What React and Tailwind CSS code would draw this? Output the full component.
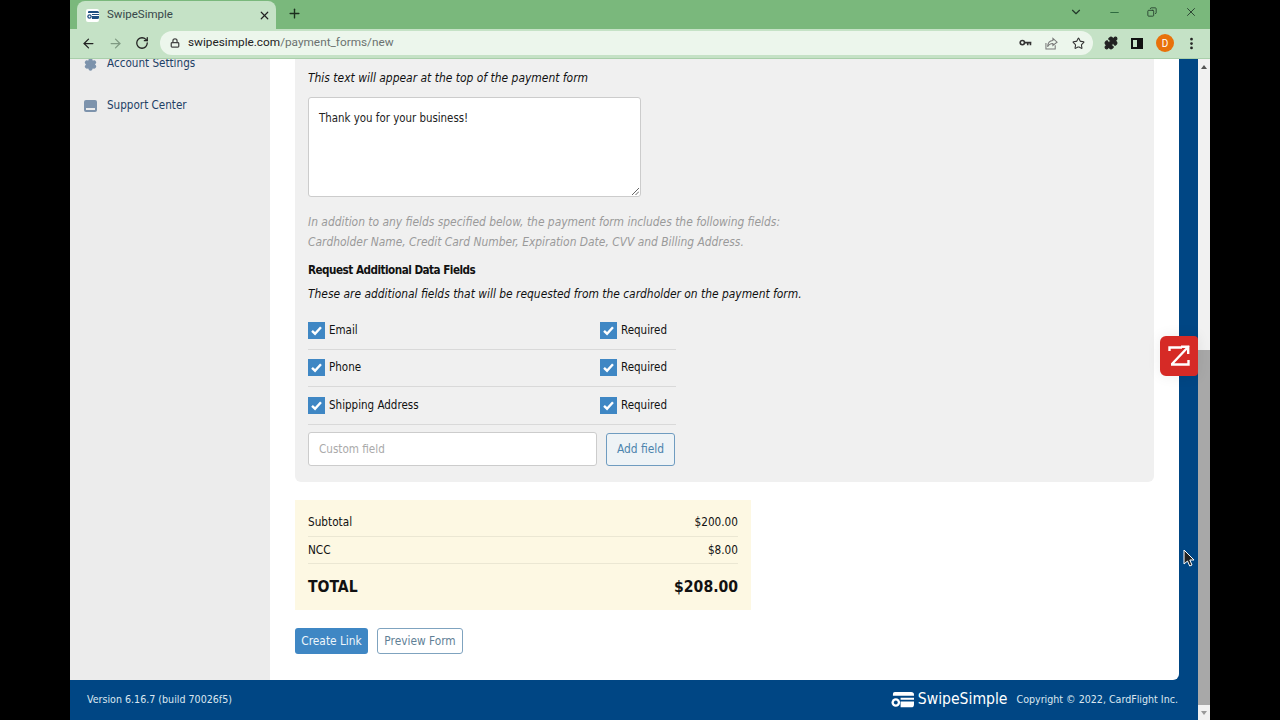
import { ArrowLeft, ArrowRight, RotateCw, Lock, Plus, X, ChevronDown, Minus, Copy, Star, Puzzle, EllipsisVertical, Settings } from "lucide-react";

const font = "font-['DejaVu_Sans_Condensed','DejaVu_Sans',sans-serif]";

function CardLogo({ className, dot, bar }) {
  return (
    <svg viewBox="0 0 24 16" className={className}>
      <path d="M4 0h17a3 3 0 0 1 3 3v1H2V2a2 2 0 0 1 2-2z" fill={bar} />
      <path d="M10 6h14v2H10zM10 10h14v3a3 3 0 0 1-3 3H10z" fill={bar} />
      <circle cx="5" cy="11" r="4.5" fill={bar} />
      <circle cx="5" cy="11" r="2" fill={dot} />
    </svg>
  );
}

function Check({ label }) {
  return (
    <div className="flex items-center gap-1">
      <span className="flex h-[17px] w-[17px] items-center justify-center bg-[#3f87c4]">
        <svg viewBox="0 0 16 16" className="h-[13px] w-[13px]">
          <path d="M2.5 8.5l3.7 3.5 7.3-8" fill="none" stroke="#fff" strokeWidth="3" />
        </svg>
      </span>
      <span className="text-[11.5px] text-[#111]">{label}</span>
    </div>
  );
}

function FieldRow({ label }) {
  return (
    <div className="flex h-[37.5px] w-[368px] items-center border-b border-[#d9d9d9]">
      <div className="w-[292px]">
        <Check label={label} />
      </div>
      <Check label="Required" />
    </div>
  );
}

function Browser() {
  return (
    <div className="shrink-0">
      {/* Tabs */}
      <div className="flex h-[29px] items-end bg-[#7ab87c] pl-[7px]">
        <div className="flex h-[28px] w-[199px] items-center rounded-t-lg bg-[#c5e2c6] pl-[9px] pr-[5px]">
          <span className="flex h-[13px] w-[13px] items-center justify-center rounded-[2px] bg-white">
            <CardLogo className="w-[12px]" bar="#1d4f80" dot="#fff" />
          </span>
          <span className="ml-[8px] flex-1 font-['Roboto',sans-serif] text-[11.5px] text-[#37474a]">SwipeSimple</span>
          <X size={13} strokeWidth={2.2} className="text-[#222]" />
        </div>
        <Plus size={15} strokeWidth={2.2} className="mb-[8px] ml-[11px] text-[#1c2f1e]" />
        <div className="mb-[10px] ml-auto flex items-center pr-[12px] text-[#22382a]">
          <ChevronDown size={14} className="mr-[25px]" />
          <Minus size={13} className="mr-[26px] text-[#2e6b40]" />
          <Copy size={10} className="mr-[27px] -scale-x-100" />
          <X size={14} strokeWidth={1.5} />
        </div>
      </div>
      {/* Toolbar */}
      <div className="flex h-[30px] items-center border-b border-[#a9cfaa] bg-[#c5e2c6] pb-[1px] pl-[11px] pr-[11px]">
        <ArrowLeft size={15} strokeWidth={2} className="text-[#222]" />
        <ArrowRight size={15} strokeWidth={2} className="ml-[12px] text-[#7f9a82]" />
        <RotateCw size={14} strokeWidth={2.2} className="ml-[12px] text-[#222]" />
        <div className="ml-[11px] flex h-[24px] flex-1 items-center rounded-full bg-[#ecf6ec] pl-[10px] pr-[8px]">
          <Lock size={10} strokeWidth={3} className="text-[#444]" />
          <span className="ml-[8px] font-['Roboto',sans-serif] text-[11.8px] text-[#222]">
            swipesimple.com<span className="text-[#6b7270]">/payment_forms/new</span>
          </span>
          <svg viewBox="0 0 14 10" className="ml-auto h-[9px] w-[13px]" fill="none" stroke="#333" strokeWidth="1.8">
            <circle cx="3.5" cy="4" r="2.4" />
            <path d="M6 4h7.5M9.5 4v3M12.5 4v3" />
          </svg>
          <svg viewBox="0 0 14 14" className="ml-[13px] h-[13px] w-[13px]" fill="none" stroke="#777" strokeWidth="1.1">
            <path d="M1 6.5V13h10V9" />
            <path d="M8.5 1.5L13 5.5 8.5 9V7C6 7 4 8 2.8 10.5 3 7 5 4 8.5 3.8z" />
          </svg>
          <Star size={13} strokeWidth={2} className="ml-[14px] text-[#333]" />
        </div>
        <Puzzle size={14} strokeWidth={2.2} className="ml-[11px] fill-[#222] text-[#222]" />
        <span className="ml-[13px] flex h-[11px] w-[12px] justify-end border-2 border-[#111]">
          <span className="h-full w-[4px] bg-[#111]" />
        </span>
        <span className="ml-[13px] flex h-[18px] w-[18px] items-center justify-center rounded-full bg-[#e8710a] font-['Roboto',sans-serif] text-[10px] text-white">D</span>
        <EllipsisVertical size={15} strokeWidth={2.4} className="ml-[10px] text-[#222]" />
      </div>
    </div>
  );
}

function Sidebar() {
  return (
    <div className="-mt-[2px] w-[200px] shrink-0 bg-[#ececec] pl-[14px] text-[11.6px] text-[#1d3f66]">
      <div className="flex h-[14px] items-center gap-[10px]">
        <Settings size={13} strokeWidth={3} className="fill-[#7d93ac] text-[#7d93ac]" />
        <span>Account Settings</span>
      </div>
      <div className="mt-[28px] flex h-[14px] items-center gap-[10px]">
        <span className="flex h-[12px] w-[13px] items-end justify-center rounded-[2px] bg-[#7d93ac] px-[2px] pb-[2px]">
          <span className="h-[2px] w-full bg-[#ececec]" />
        </span>
        <span>Support Center</span>
      </div>
    </div>
  );
}

export default function App() {
  return (
    <div className={`relative flex h-screen w-full flex-col overflow-hidden bg-black px-[70px] ${font}`}>
      <Browser />
      <div className="flex min-h-0 flex-1">
        <div className="flex min-w-0 flex-1 flex-col bg-[#004684]">
          <div className="flex min-h-0 flex-1 overflow-hidden pr-[19px]">
            <Sidebar />
            <main className="flex-1 rounded-br-md bg-white px-[25px]">
              <div className="h-[423px] rounded-b-md bg-[#f0f0f0] px-[13px] pt-[11px]">
                <p className="text-[11.95px] italic leading-[16px] text-[#111]">This text will appear at the top of the payment form</p>
                <div className="relative mt-[11px] h-[100px] w-[333px] rounded-[3px] border border-[#ccc] bg-white px-[10px] py-[12px] text-[11.4px] leading-[16px] text-[#222]">
                  Thank you for your business!
                  <svg viewBox="0 0 8 8" className="absolute bottom-[1px] right-[1px] h-[8px] w-[8px]">
                    <path d="M1 8l7-7M4.5 8L8 4.5" stroke="#666" strokeWidth="1" />
                  </svg>
                </div>
                <p className="mt-[15px] text-[11.9px] italic leading-[20px] text-[#9a9a9a]">
                  In addition to any fields specified below, the payment form includes the following fields:
                  <br />
                  Cardholder Name, Credit Card Number, Expiration Date, CVV and Billing Address.
                </p>
                <p className="mt-[10px] text-[11.6px] font-bold leading-[16px] tracking-[-0.5px] text-[#111]">Request Additional Data Fields</p>
                <p className="mt-[8px] text-[11.9px] italic leading-[16px] text-[#111]">These are additional fields that will be requested from the cardholder on the payment form.</p>
                <div className="mt-[10px]">
                  <FieldRow label="Email" />
                  <FieldRow label="Phone" />
                  <FieldRow label="Shipping Address" />
                </div>
                <div className="mt-[7.5px] flex items-center gap-[9px]">
                  <div className="flex h-[34px] w-[289px] items-center rounded-[3px] border border-[#ccc] bg-white px-[10px] pt-[1px] text-[11.6px] text-[#aaa]">Custom field</div>
                  <button className="h-[33px] w-[69px] rounded-[3px] border border-[#6f9cc0] bg-[#eef3f6] pt-[1px] text-[11.9px] text-[#4c84ad]">Add field</button>
                </div>
              </div>
              <div className="mt-[18px] h-[110px] w-[456px] bg-[#fdf8e3] px-[13px] text-[11.7px] text-[#111]">
                <div className="flex h-[37px] items-center justify-between border-b border-[#ebe7d3] pt-[10px]">
                  <span>Subtotal</span>
                  <span>$200.00</span>
                </div>
                <div className="flex h-[27px] items-center justify-between border-b border-[#ebe7d3] pt-[1px]">
                  <span>NCC</span>
                  <span>$8.00</span>
                </div>
                <div className="flex h-[46px] items-center justify-between pt-[1px] text-[15.6px] font-bold">
                  <span>TOTAL</span>
                  <span>$208.00</span>
                </div>
              </div>
              <div className="mt-[18px] flex gap-[9px] text-[11.8px]">
                <button className="h-[26px] w-[73px] rounded-[3px] bg-[#3f87c4] pt-[1px] text-[#eef6fb]">Create Link</button>
                <button className="h-[26px] w-[86px] rounded-[3px] border border-[#7fa3bf] bg-white pt-[1px] text-[#5f7f96]">Preview Form</button>
              </div>
            </main>
          </div>
          <footer className="flex h-[40px] shrink-0 items-center pl-[17px] pr-[20px] text-[10.6px] text-[#dbe6f0]">
            <span>Version 6.16.7 (build 70026f5)</span>
            <CardLogo className="ml-auto w-[23px]" bar="#fff" dot="#004684" />
            <span className="ml-[4px] text-[15.6px] text-white">SwipeSimple</span>
            <span className="ml-[9px]">Copyright © 2022, CardFlight Inc.</span>
          </footer>
        </div>
        {/* Scrollbar */}
        <div className="flex w-[12px] shrink-0 flex-col bg-[#f1f1f1]">
          <div className="flex h-[15px] items-center justify-center">
            <span className="border-x-[3.5px] border-b-[4px] border-x-transparent border-b-[#555]" />
          </div>
          <div className="mt-[276px] w-full flex-1 bg-[#a8a8a8]" />
          <div className="flex h-[15px] items-center justify-center">
            <span className="border-x-[3.5px] border-t-[4px] border-x-transparent border-t-[#999]" />
          </div>
        </div>
      </div>

      {/* Floating extension badge */}
      <div className="absolute left-[1160px] top-[336px] flex h-[40px] w-[38px] items-center justify-center rounded-l-md rounded-r-sm bg-[#d62a26] shadow-[0_0_14px_rgba(0,0,0,0.08)]">
        <svg viewBox="0 0 24 24" className="h-[24px] w-[24px]" fill="none" stroke="#fff" strokeWidth="2.4">
          <path d="M2.5 7V3.5H15M22 2L5 20M14 2.8h7.2V10M4 20.5h17.5V16" />
        </svg>
      </div>

      {/* Mouse cursor */}
      <svg viewBox="0 0 12 18" className="absolute left-[1183px] top-[549px] h-[18px] w-[12px]">
        <path d="M1 1v14l3.5-3 2.2 5 2.3-1-2.2-5H11z" fill="#222" stroke="#fff" strokeWidth="1" />
      </svg>
    </div>
  );
}
